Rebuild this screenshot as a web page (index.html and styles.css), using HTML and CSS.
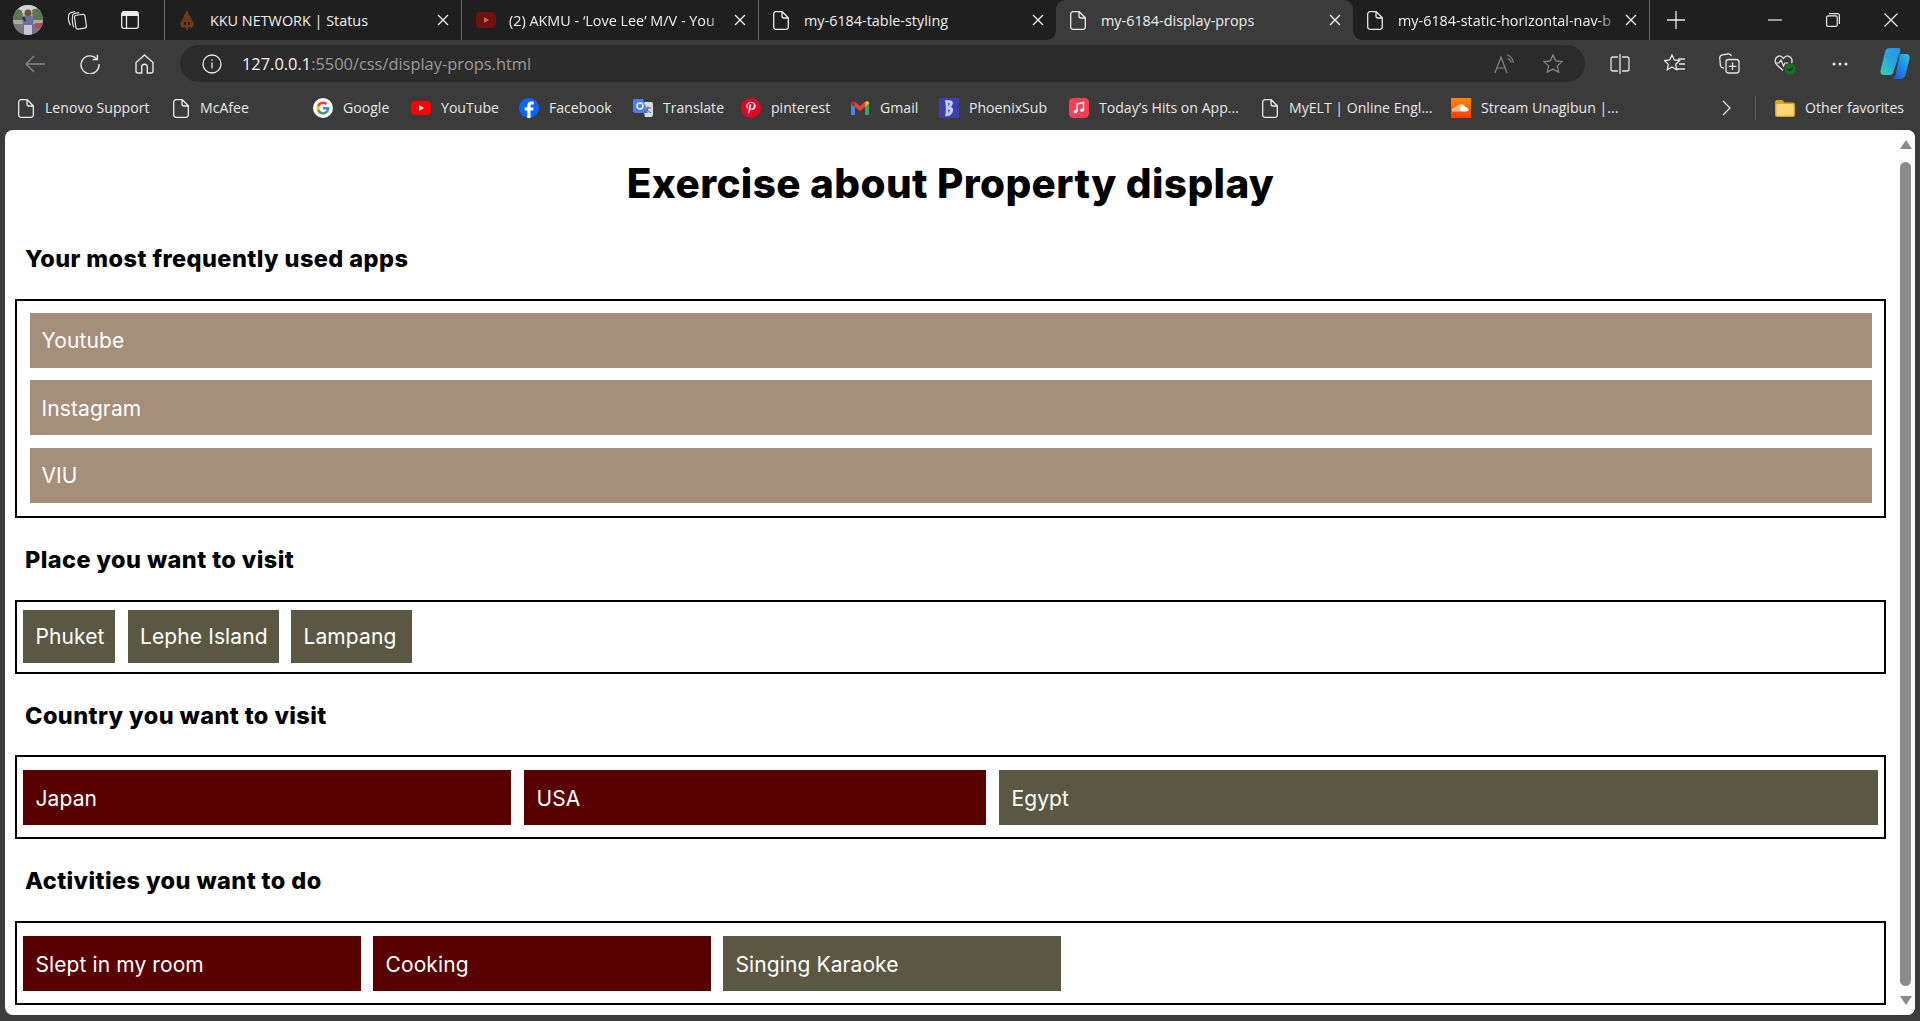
FILE: index.html
```html
<!DOCTYPE html>
<html lang="en">
<head>
  <meta charset="UTF-8">
  <title>my-6184-display-props</title>
  <link rel="stylesheet" href="styles.css">
</head>
<body>
  <svg class="sprites" width="0" height="0">
    <symbol id="doc" viewBox="0 0 16 19">
      <path d="M3 .7h6.2L15.3 6.8V16a2.3 2.3 0 0 1-2.3 2.3H3A2.3 2.3 0 0 1 .7 16V3A2.3 2.3 0 0 1 3 .7zM9 .9V5a2 2 0 0 0 2 2h4.2" fill="none" stroke="#ebebeb" stroke-width="1.3"/>
    </symbol>
    <symbol id="close" viewBox="0 0 12 12">
      <path d="M1 1l10 10M11 1L1 11" fill="none" stroke="#f2f2f2" stroke-width="1.3"/>
    </symbol>
  </svg>

  <div class="window">
    <header class="tabstrip">
      <div class="strip-tools">
        <svg class="avatar" width="30" height="30" viewBox="0 0 30 30">
          <defs><clipPath id="av"><circle cx="15" cy="15" r="15"/></clipPath></defs>
          <g clip-path="url(#av)">
            <rect width="30" height="30" fill="#a9aca0"/>
            <rect width="30" height="8" fill="#c9d3cd"/>
            <path d="M0 6q4-4 9 0l1 9H0zM19 5q6-3 11 1v9H20z" fill="#5f7350"/>
            <rect y="19" width="30" height="11" fill="#7d7a76"/>
            <path d="M22 18h8v5h-8z" fill="#b8494a"/>
            <circle cx="15" cy="8" r="3.4" fill="#6e5142"/>
            <path d="M9 13l3-2h6l3 2-1 6 1 11H9l1-11z" fill="#6d6d9f"/>
            <path d="M11 20h8v10h-8z" fill="#c7c5d6"/>
            <path d="M9 13l3 4 1-2-2-4z" fill="#2f2c35"/>
          </g>
        </svg>
        <svg class="strip-icon" width="20" height="20" viewBox="0 0 20 20" fill="none" stroke="#e3e3e3" stroke-width="1.2">
          <rect x="8.2" y="4.8" width="10.6" height="14" rx="2" transform="rotate(-8 13 12)"/>
          <path d="M6.8 17.2C5.4 14 5 10 5.6 5.6c.2-1.4 1-2 2.2-2.2l4.5-.8"/>
          <path d="M3.4 15.2C1.6 12 1 8.800 1.700 5c.3-1.300 1-2 2.200-2.300L8 1.500"/>
        </svg>
        <svg class="strip-icon" width="18" height="18" viewBox="0 0 18 18">
          <path d="M3 .6h12A2.400 2.400 0 0 1 17.400 3v2H.6V3A2.400 2.400 0 0 1 3 .6z" fill="#ededed"/>
          <path d="M3 .7h12A2.300 2.300 0 0 1 17.300 3v12a2.300 2.300 0 0 1-2.300 2.300H3A2.300 2.300 0 0 1 .7 15V3A2.300 2.300 0 0 1 3 .7zM5.500 5v12.300" fill="none" stroke="#ededed" stroke-width="1.300"/>
        </svg>
      </div>

      <div class="tab">
        <svg class="favicon" width="16" height="20" viewBox="0 0 16 20"><path d="M8 0l3 6 4 8-2 4-3-1-2 3-2-3-3 1-2-4 4-8z" fill="#6e3c16"/><path d="M5 12h2v3H5zM9 12h2v3H9z" fill="#2e1c10"/></svg>
        <span class="tab-title">KKU NETWORK | Status</span>
        <svg class="tab-close" width="12" height="12"><use href="#close"/></svg>
      </div>
      <div class="tab">
        <svg class="favicon yt-dim" width="20" height="16" viewBox="0 0 20 16"><rect width="20" height="16" rx="4" fill="#6d1212"/><path d="M8 5l5 3-5 3z" fill="#c46a6a"/></svg>
        <span class="tab-title tab-title-fade">(2) AKMU - ‘Love Lee’ M/V - You</span>
        <svg class="tab-close" width="12" height="12"><use href="#close"/></svg>
      </div>
      <div class="tab tab-before-active">
        <svg class="favicon" width="16" height="19"><use href="#doc"/></svg>
        <span class="tab-title">my-6184-table-styling</span>
        <svg class="tab-close" width="12" height="12"><use href="#close"/></svg>
      </div>
      <div class="tab tab-active">
        <svg class="favicon" width="16" height="19"><use href="#doc"/></svg>
        <span class="tab-title">my-6184-display-props</span>
        <svg class="tab-close" width="12" height="12"><use href="#close"/></svg>
      </div>
      <div class="tab tab-last">
        <svg class="favicon" width="16" height="19"><use href="#doc"/></svg>
        <span class="tab-title tab-title-fade">my-6184-static-horizontal-nav-b</span>
        <svg class="tab-close" width="12" height="12"><use href="#close"/></svg>
      </div>

      <svg class="new-tab" width="18" height="18" viewBox="0 0 18 18"><path d="M9 0v18M0 9h18" stroke="#ececec" stroke-width="1.300"/></svg>

      <div class="window-controls">
        <span class="win-btn"><svg width="14" height="14" viewBox="0 0 14 14"><path d="M0 7h14" stroke="#ececec" stroke-width="1.200"/></svg></span>
        <span class="win-btn"><svg width="14" height="14" viewBox="0 0 14 14" fill="none" stroke="#ececec" stroke-width="1.200"><rect x=".6" y="2.800" width="10.600" height="10.600" rx="1.500"/><path d="M3 .6h8.400a2 2 0 0 1 2 2V11"/></svg></span>
        <span class="win-btn"><svg width="14" height="14" viewBox="0 0 14 14"><path d="M.5.500l13 13M13.500.500l-13 13" stroke="#ececec" stroke-width="1.200"/></svg></span>
      </div>
    </header>

    <nav class="toolbar">
      <span class="tool-btn"><svg width="20" height="18" viewBox="0 0 20 18" fill="none" stroke="#858585" stroke-width="1.400"><path d="M20 9H1M9 1L1 9l8 8"/></svg></span>
      <span class="tool-btn"><svg width="20" height="20" viewBox="0 0 20 20" fill="none" stroke="#e6e6e6" stroke-width="1.400"><path d="M16.600 4.700A9 9 0 1 0 19 10"/><path d="M17.400.8v4.700h-4.700"/></svg></span>
      <span class="tool-btn"><svg width="19" height="20" viewBox="0 0 19 20" fill="none" stroke="#e6e6e6" stroke-width="1.400"><path d="M9.500 1L1 8.500V17a2 2 0 0 0 2 2h3.700v-6a2.800 2.800 0 0 1 5.600 0v6H16a2 2 0 0 0 2-2V8.500z"/></svg></span>

      <div class="omnibox">
        <svg class="omni-info" width="20" height="20" viewBox="0 0 20 20" fill="none" stroke="#ececec" stroke-width="1.300"><circle cx="10" cy="10" r="9"/><path d="M10 8.500v6M10 5.300v1.500"/></svg>
        <span class="url"><span class="url-host">127.0.0.1</span>:5500/css/display-props.html</span>
        <svg class="omni-read" width="22" height="20" viewBox="0 0 22 20" fill="none" stroke="#858585" stroke-width="1.200"><path d="M1 19L7 3l6 16M3 14h8"/><path d="M13 1c3.500 1 6 4 6.500 8M13.500 4.500c2 .6 3.200 2 3.700 4"/></svg>
        <svg class="omni-star" width="20" height="20" viewBox="0 0 20 20" fill="none" stroke="#858585" stroke-width="1.300"><path d="M10 1l2.700 5.800 6.300.8-4.600 4.300 1.200 6.200L10 15.100l-5.600 3 1.200-6.200L1 7.600l6.300-.8z"/></svg>
      </div>

      <div class="toolbar-right">
        <span class="tool-btn"><svg width="20" height="20" viewBox="0 0 20 20" fill="none" stroke="#e6e6e6" stroke-width="1.300"><path d="M8 3H3a2 2 0 0 0-2 2v10a2 2 0 0 0 2 2h5M12 3h5a2 2 0 0 1 2 2v10a2 2 0 0 1-2 2h-5M10 0v20"/></svg></span>
        <span class="tool-btn"><svg width="22" height="20" viewBox="0 0 22 20" fill="none" stroke="#e6e6e6" stroke-width="1.300"><path d="M8 1l2.300 5 5.200.7-3.800 3.600 1 5.400L8 13l-4.700 2.700 1-5.400L.5 6.700 5.700 6zM14 5h7M15 10h6M12 15h9"/></svg></span>
        <span class="tool-btn"><svg width="21" height="21" viewBox="0 0 21 21" fill="none" stroke="#e6e6e6" stroke-width="1.300"><path d="M5 15c-2 0-3.300-.8-3.600-2.500L.8 5.500C.6 3.500 1.500 2.200 3.500 1.800L9 1c1.500-.2 2.800.5 3.300 2"/><rect x="7" y="6.500" width="13" height="13.500" rx="2.500"/><path d="M13.500 9.500v7.500M9.800 13.300h7.500"/></svg></span>
        <span class="tool-btn"><svg width="22" height="22" viewBox="0 0 22 22" fill="none"><path d="M9 17.500L3 12C0 9 1 4.500 4 3.300c2-.8 4 0 5.500 2 1.500-2 3.500-2.800 5.500-2 2.800 1.100 3.600 4 2.600 6.700" stroke="#e6e6e6" stroke-width="1.300"/><path d="M1 10h4l2-3 2.500 6 1.500-3h3" stroke="#e6e6e6" stroke-width="1.200"/><circle cx="16.200" cy="16" r="5.500" fill="#17701f"/><path d="M13.700 16l1.800 1.800 3-3.300" stroke="#0c2c10" stroke-width="1.300"/></svg></span>
        <span class="tool-btn"><svg width="16" height="4" viewBox="0 0 16 4" fill="#ececec"><circle cx="2" cy="2" r="1.500"/><circle cx="8" cy="2" r="1.500"/><circle cx="14" cy="2" r="1.500"/></svg></span>
        <span class="tool-btn"><svg width="30" height="33" viewBox="0 0 30 33">
          <defs>
            <linearGradient id="cp1" x1="0" y1="1" x2="1" y2="0"><stop offset="0" stop-color="#3ed6a5"/><stop offset=".5" stop-color="#27a7e0"/><stop offset="1" stop-color="#2a8ff0"/></linearGradient>
            <linearGradient id="cp2" x1="0" y1="1" x2="1" y2="0"><stop offset="0" stop-color="#1b4fd8"/><stop offset=".6" stop-color="#1f8fe8"/><stop offset="1" stop-color="#2bc6e8"/></linearGradient>
          </defs>
          <path d="M10 1h8c2.500 0 2.800 1.500 2 4l-7 21c-.6 1.500-1.600 2-3 2H4c-2.500 0-4-2-3.400-4.500L5 5c.8-2.600 2.500-4 5-4z" fill="url(#cp1)"/>
          <path d="M20 7h6c2.500 0 4 2 3.500 4.500L25.500 28c-.8 2.800-2.500 4-5 4h-10c2.500 0 4-1 5-3.500z" fill="url(#cp2)"/>
        </svg></span>
      </div>
    </nav>

    <nav class="bookmarks">
      <div class="bookmark-list">
        <a class="bookmark"><svg class="bm-doc" width="16" height="19"><use href="#doc"/></svg>Lenovo Support</a>
        <a class="bookmark"><svg class="bm-doc" width="16" height="19"><use href="#doc"/></svg>McAfee</a>
        <a class="bookmark"><svg class="bm-fav" width="20" height="20" viewBox="0 0 20 20"><circle cx="10" cy="10" r="10" fill="#fff"/><path d="M16.200 10.200c0-.5 0-.9-.1-1.300H10v2.500h3.500a3 3 0 0 1-1.300 2v1.600h2.100c1.200-1.100 1.900-2.800 1.900-4.800z" fill="#4285f4"/><path d="M10 16.500c1.800 0 3.200-.6 4.300-1.600l-2.100-1.600c-.6.400-1.300.6-2.200.6-1.700 0-3.100-1.100-3.600-2.700H4.200v1.700a6.500 6.500 0 0 0 5.800 3.600z" fill="#34a853"/><path d="M6.400 11.200a3.900 3.900 0 0 1 0-2.400V7.100H4.200a6.500 6.500 0 0 0 0 5.800z" fill="#fbbc05"/><path d="M10 5.900c.9 0 1.800.3 2.500 1l1.800-1.900A6.300 6.300 0 0 0 10 3.500a6.500 6.500 0 0 0-5.800 3.600l2.200 1.700c.5-1.700 1.900-2.900 3.600-2.900z" fill="#ea4335"/></svg>Google</a>
        <a class="bookmark"><svg class="bm-fav" width="20" height="20" viewBox="0 0 20 20"><rect y="3" width="20" height="14" rx="4" fill="#f00"/><path d="M8 7l5 3-5 3z" fill="#fff"/></svg>YouTube</a>
        <a class="bookmark"><svg class="bm-fav" width="20" height="20" viewBox="0 0 20 20"><circle cx="10" cy="10" r="10" fill="#0866ff"/><path d="M11.500 20v-7.500h2.600l.5-3h-3.100V8c0-1 .4-1.600 1.700-1.600h1.500V3.700c-.6-.1-1.400-.2-2.200-.2-2.600 0-4.200 1.500-4.200 4.200v1.800H5.700v3h2.600V20z" fill="#fff"/></svg>Facebook</a>
        <a class="bookmark"><svg class="bm-fav" width="20" height="20" viewBox="0 0 20 20"><path d="M9 4h9a2 2 0 0 1 2 2v11a2 2 0 0 1-2 2h-6z" fill="#d9dde3"/><path d="M2 1h8l5 14H2a2 2 0 0 1-2-2V3a2 2 0 0 1 2-2z" fill="#4a82e8"/><circle cx="7" cy="8" r="3" fill="none" stroke="#fff" stroke-width="1.300"/><path d="M13 10h5M15 8.500c0 3-1 5-3 6.500M14 11c1 2 2.500 3 4 4" stroke="#555d6b" fill="none"/></svg>Translate</a>
        <a class="bookmark"><svg class="bm-fav" width="20" height="20" viewBox="0 0 20 20"><circle cx="10" cy="10" r="10" fill="#e60023"/><path d="M10.300 4C7 4 5.300 6.200 5.300 8.100c0 1.200.5 2.200 1.400 2.600.3.100.4 0 .5-.3l.2-.7c0-.2 0-.3-.2-.5-.3-.4-.5-.8-.5-1.400 0-1.700 1.300-3.100 3.300-3.100 1.800 0 2.800 1.100 2.800 2.600 0 1.900-.9 3.500-2.100 3.500-.7 0-1.200-.6-1-1.300.2-.8.600-1.700.6-2.300 0-.5-.3-1-.9-1-.7 0-1.300.8-1.300 1.800 0 .7.200 1.100.2 1.100l-.9 3.700c-.2 1-.1 2.300 0 3.100 1-.9 1.500-2.300 1.800-3.200l.4-1.600c.2.400.9.800 1.600.8 2.100 0 3.600-1.900 3.600-4.400C14.300 5.700 12.600 4 10.300 4z" fill="#fff"/></svg>pinterest</a>
        <a class="bookmark"><svg class="bm-fav bm-gmail" width="18" height="14" viewBox="0 0 18 14"><path d="M0 3l4 3v8H1a1 1 0 0 1-1-1z" fill="#4285f4"/><path d="M14 6l4-3v10a1 1 0 0 1-1 1h-3z" fill="#34a853"/><path d="M14 1v5l4-3V2c0-1.700-1.900-2.600-3-1.600z" fill="#fbbc05"/><path d="M4 6V1l5 4 5-4v5l-5 4z" fill="#ea4335"/><path d="M0 2v1l4 3V1L3 .4C1.900-.6 0 .3 0 2z" fill="#c5221f"/></svg>Gmail</a>
        <a class="bookmark"><svg class="bm-fav" width="20" height="20" viewBox="0 0 20 20"><rect width="20" height="20" fill="#3c3fb0"/><path d="M6 2l6 .5c2.800.8 2.300 4.200-.3 6.300 3.300.8 3.300 5.200-.5 8.700l-5 1c1-5 .8-11 -.2-16.500z" fill="#c7cdf0"/><path d="M9 5l2 .5-1.500 3zM9 11.500l2 .5-1.500 3" fill="#3c3fb0"/></svg>PhoenixSub</a>
        <a class="bookmark"><svg class="bm-fav" width="20" height="20" viewBox="0 0 20 20"><rect width="20" height="20" rx="4.500" fill="#fb3c55"/><path d="M8 13.800V6l6.500-1.500v7.800" fill="none" stroke="#fff" stroke-width="1.500"/><circle cx="6.400" cy="13.800" r="1.800" fill="#fff"/><circle cx="12.900" cy="12.300" r="1.800" fill="#fff"/></svg>Today’s Hits on App...</a>
        <a class="bookmark"><svg class="bm-doc" width="16" height="19"><use href="#doc"/></svg>MyELT | Online Engl...</a>
        <a class="bookmark"><svg class="bm-fav" width="20" height="20" viewBox="0 0 20 20"><defs><linearGradient id="sc" x1="0" y1="0" x2="0" y2="1"><stop offset="0" stop-color="#ff8a00"/><stop offset="1" stop-color="#ff3a00"/></linearGradient></defs><rect width="20" height="20" fill="url(#sc)"/><path d="M2 13.500v-3M4 13.500V9M6 13.500V8M8 13.500V6.800" stroke="#fff" stroke-width="1.100"/><path d="M9.200 6.500c2.500-.8 4.500.6 5 2.800 1.700-.4 3.300.6 3.300 2.200 0 1.200-1 2-2.200 2H9.200z" fill="#fff"/></svg>Stream Unagibun |...</a>
      </div>
      <svg class="bm-more" width="10" height="16" viewBox="0 0 10 16"><path d="M1 1l7 7-7 7" fill="none" stroke="#e0e0e0" stroke-width="1.300"/></svg>
      <span class="bm-sep"></span>
      <a class="bookmark bookmark-other"><svg class="bm-fav" width="20" height="20" viewBox="0 0 20 20"><path d="M2 2h5.500l2 2.500H18a2 2 0 0 1 2 2V17a2 2 0 0 1-2 2H2a2 2 0 0 1-2-2V4a2 2 0 0 1 2-2z" fill="#d9a520"/><rect x="1.300" y="6" width="17.400" height="11.700" rx="1" fill="#f8d775"/></svg>Other favorites</a>
    </nav>

    <div class="viewport">
      <main class="content">
        <h1 class="page-title">Exercise about Property display</h1>

        <h2 class="section-title">Your most frequently used apps</h2>
        <section class="box box-apps">
          <div class="item item-tan">Youtube</div>
          <div class="item item-tan">Instagram</div>
          <div class="item item-tan">VIU</div>
        </section>

        <h2 class="section-title">Place you want to visit</h2>
        <section class="box box-places">
          <div class="item item-short item-olive">Phuket</div>
          <div class="item item-short item-olive">Lephe Island</div>
          <div class="item item-short item-olive">Lampang</div>
        </section>

        <h2 class="section-title">Country you want to visit</h2>
        <section class="box box-row box-countries">
          <div class="item item-maroon">Japan</div>
          <div class="item item-maroon">USA</div>
          <div class="item item-olive">Egypt</div>
        </section>

        <h2 class="section-title">Activities you want to do</h2>
        <section class="box box-row box-activities">
          <div class="item item-maroon">Slept in my room</div>
          <div class="item item-maroon">Cooking</div>
          <div class="item item-olive">Singing Karaoke</div>
        </section>
      </main>

      <aside class="scrollbar">
        <svg width="12" height="9" viewBox="0 0 12 9"><path d="M6 0l6 9H0z" fill="#8b8b8b"/></svg>
        <div class="scroll-thumb"></div>
        <svg width="12" height="9" viewBox="0 0 12 9"><path d="M6 9l6-9H0z" fill="#8b8b8b"/></svg>
      </aside>
    </div>
  </div>
</body>
</html>
```

FILE: styles.css
```css
html, body {
  margin: 0;
  padding: 0;
  overflow: hidden;
}

.sprites {
  position: absolute;
}

.window {
  width: 1920px;
  height: 1021px;
  background: #3b3b3b;
  font-family: "Open Sans", sans-serif;
  font-size: 14.4px;
  color: #f0f0f0;
  display: flex;
  flex-direction: column;
}

/* tab strip */
.tabstrip {
  height: 40px;
  flex: none;
  background: #1f1f1f;
  display: flex;
  align-items: center;
}

.strip-tools {
  width: 165px;
  height: 100%;
  flex: none;
  display: flex;
  align-items: center;
  padding-left: 13px;
  box-sizing: border-box;
  border-right: 1px solid #6a6a6a;
  background-clip: padding-box;
}

.strip-icon:nth-of-type(2) {
  margin-left: 24px;
}

.strip-icon:nth-of-type(3) {
  margin-left: 34px;
}

.tab {
  width: 297px;
  height: 100%;
  flex: none;
  box-sizing: border-box;
  padding: 0 12px 0 14px;
  display: flex;
  align-items: center;
  position: relative;
  border-right: 1px solid #6a6a6a;
}

.tab-title {
  flex: 1;
  min-width: 0;
  margin-left: 15px;
  white-space: nowrap;
  overflow: hidden;
}

.tab-title-fade {
  -webkit-mask-image: linear-gradient(to right, #000 90%, transparent 100%);
  mask-image: linear-gradient(to right, #000 90%, transparent 100%);
}

.yt-dim + .tab-title {
  margin-left: 13px;
}

.tab-close {
  flex: none;
  margin-left: 6px;
}

.tab-before-active {
  border-right: none;
}

.tab-active {
  height: 45px;
  align-self: flex-start;
  padding-bottom: 5px;
  background: #3b3b3b;
  border-right: none;
  border-radius: 9px 9px 0 0;
  z-index: 1;
}

.tab-active::before,
.tab-active::after {
  content: "";
  position: absolute;
  bottom: 5px;
  width: 9px;
  height: 9px;
}

.tab-active::before {
  left: -9px;
  background: radial-gradient(circle at 0 0, transparent 8.500px, #3b3b3b 9px);
}

.tab-active::after {
  right: -9px;
  background: radial-gradient(circle at 100% 0, transparent 8.500px, #3b3b3b 9px);
}

.new-tab {
  flex: none;
  margin-left: 17px;
}

.window-controls {
  margin-left: auto;
  display: flex;
}

.win-btn {
  width: 58px;
  height: 40px;
  display: flex;
  align-items: center;
  justify-content: center;
}

/* toolbar */
.toolbar {
  height: 42px;
  flex: none;
  box-sizing: border-box;
  padding-left: 7px;
  display: flex;
  align-items: flex-end;
}

.tool-btn {
  width: 55px;
  height: 37px;
  flex: none;
  display: flex;
  align-items: center;
  justify-content: center;
}

.omnibox {
  width: 1405px;
  height: 37px;
  flex: none;
  margin-left: 8px;
  box-sizing: border-box;
  padding: 0 22px;
  background: #2b2b2b;
  border-radius: 19px;
  display: flex;
  align-items: center;
}

.url {
  margin-left: 20px;
  font-size: 16.4px;
  color: #9a9a9a;
}

.url-host {
  color: #f5f5f5;
}

.omni-read {
  margin-left: auto;
}

.omni-star {
  margin-left: 27px;
}

.toolbar-right {
  display: flex;
  margin-left: 7px;
}

/* bookmarks bar */
.bookmarks {
  height: 48px;
  flex: none;
  box-sizing: border-box;
  padding: 4px 0 0 18px;
  display: flex;
  align-items: center;
  font-size: 14.1px;
  color: #e8e8e8;
}

.bookmark-list {
  display: grid;
  grid-template-columns: 155px 140px 98px 108px 114px 108px 110px 88px 130px 193px 189px 150px;
  flex: none;
  width: 1704px;
}

.bookmark {
  display: flex;
  align-items: center;
  white-space: nowrap;
  line-height: 22px;
}

.bm-doc {
  margin-right: 11px;
  flex: none;
}

.bm-fav {
  margin-right: 10px;
  flex: none;
}

.bm-gmail {
  margin-right: 11px;
}

.bm-more {
  flex: none;
}

.bm-sep {
  width: 1px;
  height: 24px;
  margin-left: 23px;
  background: #5e5e5e;
  flex: none;
}

.bookmark-other {
  margin-left: 19px;
}

/* page */
.viewport {
  height: 885px;
  flex: none;
  margin: 0 5px;
  background: #fff;
  border-radius: 8px;
  display: flex;
  overflow: hidden;
  color: #000;
}

.content {
  flex: 1;
  min-width: 0;
  padding: 24px 10px 0;
  font-family: Inter, sans-serif;
}

.page-title {
  margin: 0 0 28px;
  font-size: 40.5px;
  line-height: 60px;
  font-weight: 800;
  letter-spacing: .35px;
  text-align: center;
}

.section-title {
  margin: 25px 0 23px;
  padding-left: 10px;
  font-size: 23.5px;
  line-height: 33.750px;
  font-weight: 800;
  letter-spacing: .42px;
}

.box {
  border: 2px solid #000;
  display: grid;
  box-sizing: border-box;
}

.box-apps {
  height: 219px;
  padding: 12px 12px 0 13px;
  row-gap: 12.600px;
  grid-auto-rows: 55px;
}

.box-places {
  height: 74px;
  padding: 8px 6px 0;
  grid-template-columns: 92px 151px 121px;
  column-gap: 12.500px;
}

.box-row {
  height: 84px;
  padding: 12.750px 5px 0 6px;
}

.box-countries {
  grid-template-columns: 488px 462px 879px;
  column-gap: 13px;
}

.box-activities {
  padding-top: 13px;
  grid-template-columns: 338px 338px 338px;
  column-gap: 12px;
}

.item {
  height: 55px;
  box-sizing: border-box;
  padding: 1px 0 0 12.500px;
  display: flex;
  align-items: center;
  color: #fff;
  font-size: 21px;
  letter-spacing: .1px;
}

.box-apps .item {
  padding-left: 11.500px;
}

.item-short {
  height: 53px;
}

.item-tan {
  background: #a58e7a;
}

.item-olive {
  background: #5a5843;
}

.item-maroon {
  background: #590000;
}

/* scrollbar */
.scrollbar {
  width: 19px;
  flex: none;
  box-sizing: border-box;
  padding: 10px 0;
  background: #fdfdfd;
  display: flex;
  flex-direction: column;
  align-items: center;
}

.scroll-thumb {
  width: 11px;
  flex: 1;
  margin: 13px 0 10px;
  background: #8b8b8b;
  border-radius: 6px;
}
```
